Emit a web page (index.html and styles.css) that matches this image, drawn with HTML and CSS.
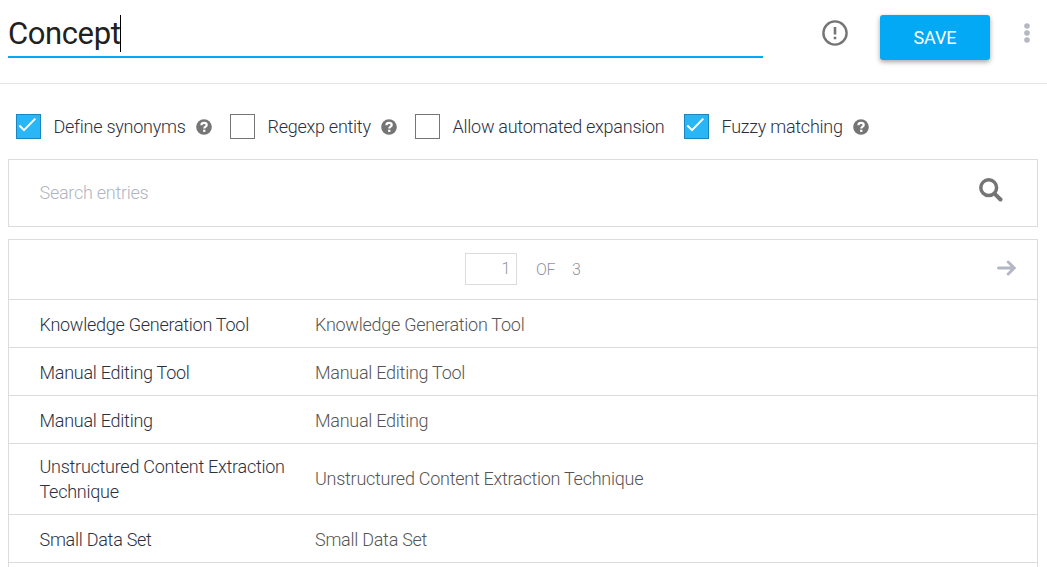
FILE: index.html
```html
<!DOCTYPE html>
<html lang="en">
<head>
<meta charset="utf-8">
<title>Concept</title>
<link rel="stylesheet" href="styles.css">
</head>
<body>
<svg class="defs" aria-hidden="true">
  <symbol id="check" viewBox="0 0 25 25"><path d="M3.3 11.5 8 16.2 19.3 4.6" fill="none" stroke="#fff" stroke-width="2"/></symbol>
  <symbol id="help" viewBox="0 0 16 16"><circle cx="8" cy="8" r="7.8" fill="#757575"/><path d="M5.4 6.2C5.5 4.6 6.5 3.9 8 3.9c1.6 0 2.7.8 2.7 2 0 1.8-2.4 1.7-2.4 3.5" fill="none" stroke="#fff" stroke-width="2.2"/><path d="M7.1 10.7h2.3v2.2H7.1z" fill="#fff"/></symbol>
</svg>
<header class="header">
  <div class="name"><span class="name-text">Concept</span><span class="caret"></span></div>
  <svg class="alert" viewBox="0 0 26 26"><circle cx="13" cy="13" r="11.6" fill="none" stroke="#757575" stroke-width="2.4"/><path d="M13 7v7.4M13 16.8v2.4" stroke="#757575" stroke-width="2.6"/></svg>
  <button class="save">SAVE</button>
  <svg class="more" viewBox="0 0 6 20"><g fill="#b3b8c4"><circle cx="3" cy="3" r="2.8"/><circle cx="3" cy="10" r="2.8"/><circle cx="3" cy="17" r="2.8"/></g></svg>
</header>
<main class="content">
  <div class="options">
    <div class="option synonyms"><span class="box checked"><svg><use href="#check"/></svg></span><span class="label">Define synonyms</span><svg class="help"><use href="#help"/></svg></div>
    <div class="option regexp"><span class="box"></span><span class="label">Regexp entity</span><svg class="help"><use href="#help"/></svg></div>
    <div class="option expansion"><span class="box"></span><span class="label">Allow automated expansion</span></div>
    <div class="option fuzzy"><span class="box checked"><svg><use href="#check"/></svg></span><span class="label">Fuzzy matching</span><svg class="help"><use href="#help"/></svg></div>
  </div>
  <div class="search">
    <span>Search entries</span>
    <svg class="glass" viewBox="0 0 24 24"><circle cx="9.7" cy="9.7" r="7.9" fill="none" stroke="#757575" stroke-width="3.5"/><path d="m15.8 15.8 5.7 5.7" stroke="#757575" stroke-width="4" stroke-linecap="round"/></svg>
  </div>
  <div class="entries">
    <div class="pager">
      <span class="page">1</span><span class="of">OF</span><span>3</span>
      <svg class="next" viewBox="0 0 20 16"><path d="M1.5 8H17M11.2 2 17.2 8l-6 6" fill="none" stroke="#b3b8c4" stroke-width="3" stroke-linecap="round"/></svg>
    </div>
    <div class="row"><span class="entry">Knowledge Generation Tool</span><span class="synonym">Knowledge Generation Tool</span></div>
    <div class="row"><span class="entry">Manual Editing Tool</span><span class="synonym">Manual Editing Tool</span></div>
    <div class="row"><span class="entry">Manual Editing</span><span class="synonym">Manual Editing</span></div>
    <div class="row tall"><span class="entry">Unstructured Content Extraction Technique</span><span class="synonym">Unstructured Content Extraction Technique</span></div>
    <div class="row"><span class="entry">Small Data Set</span><span class="synonym">Small Data Set</span></div>
    <div class="row partial"></div>
  </div>
</main>
</body>
</html>
```
FILE: styles.css
```css
* { box-sizing: border-box; }
body {
  margin: 0;
  background: #fff;
  color: #2b303f;
  font: 300 18px/25px Roboto, sans-serif;
  letter-spacing: -0.26px;
}
svg { display: block; flex: none; }
.defs { width: 0; height: 0; position: absolute; }
.header {
  display: flex;
  align-items: flex-start;
  height: 84px;
  padding-left: 8px;
  border-bottom: 1px solid #e5e5e5;
}
.name {
  display: flex;
  width: 755px;
  height: 58px;
  padding-top: 15px;
  border-bottom: 2px solid #03a9f4;
  color: #212121;
  font-size: 31px;
  font-weight: 400;
  line-height: 37px;
  letter-spacing: -0.4px;
}
.name-text { width: 112px; white-space: nowrap; }
.caret { width: 1px; height: 37px; background: #000; }
.alert { width: 26px; height: 26px; margin: 20px 0 0 59px; }
.save {
  width: 110px;
  height: 45px;
  margin: 15px 0 0 32px;
  padding: 0;
  border: 0;
  border-radius: 3px;
  background: #03a9f4;
  box-shadow: 0 2px 5px rgba(0, 0, 0, .36);
  color: #fff;
  font: 400 18px/45px Roboto, sans-serif;
  letter-spacing: -0.1px;
}
.more { width: 6px; height: 20px; margin: 23px 0 0 33.5px; }
.content { padding: 30px 9px 0 8px; }
.options { display: flex; height: 45px; padding-left: 8px; }
.option { display: flex; height: 25px; white-space: nowrap; }
.synonyms { width: 214px; }
.regexp { width: 185px; }
.expansion { width: 269px; }
.fuzzy { width: 186px; }
.box { flex: none; width: 25px; height: 25px; margin-right: 12.5px; border: 1px solid #757575; }
.checked { border-color: #1b86bd; background: #29b6f6; }
.checked svg { width: 25px; height: 25px; margin: -1px; }
.help { width: 16px; height: 16px; margin: 5px 0 0 10px; }
.search {
  display: flex;
  justify-content: space-between;
  height: 68px;
  padding: 20px 34px 0 30.5px;
  border: 1px solid #dcdcdc;
  color: #b0b5c1;
}
.glass { width: 24px; height: 24px; margin-top: -2px; }
.entries { margin-top: 12px; border: 1px solid #dcdcdc; border-bottom: 0; }
.pager {
  display: flex;
  align-items: center;
  height: 59px;
  padding: 0 20px 0 456px;
  color: #9096a4;
  font-size: 16px;
}
.page {
  width: 52px;
  height: 32px;
  margin: -2px 19px 0 0;
  padding-right: 6px;
  border: 1px solid #dcdcdc;
  line-height: 30px;
  text-align: right;
}
.of { width: 36px; }
.next { width: 20px; height: 16px; margin: -3px 0 0 auto; }
.row {
  display: grid;
  grid-template-columns: 275.5px 1fr;
  align-items: center;
  height: 48px;
  padding: 2px 20px 0 30.5px;
  border-top: 1px solid #dcdcdc;
}
.tall { height: 71px; padding-top: 0; }
.tall .synonym { margin-top: -1px; }
.partial { height: 5px; padding-top: 0; }
.entry { padding-right: 20px; }
.synonym { color: #555; }
```
